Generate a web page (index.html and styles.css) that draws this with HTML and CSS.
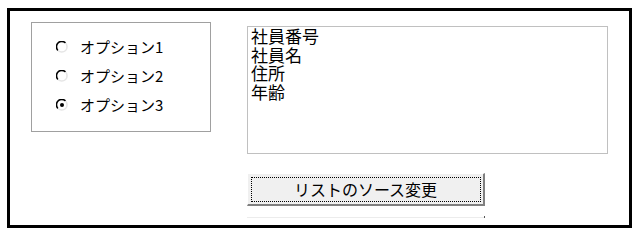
FILE: index.html
```html
<!DOCTYPE html>
<html lang="ja">
<head>
  <meta charset="UTF-8">
  <title>リストのソース変更</title>
  <link rel="stylesheet" href="styles.css">
</head>
<body>
  <!-- フォーム枠 -->
  <div class="frame">
    <!-- オプション -->
    <div class="group">
      <label class="option">
        <svg class="radio" width="12" height="12" viewBox="0 0 12 12">
          <path d="M2 9.5 A5 5 0 0 1 9.5 2" fill="none" stroke="#000" stroke-width="1.6"/>
          <path d="M9.5 2 A5 5 0 0 1 2 9.5" fill="none" stroke="#e6e6e6" stroke-width="1.6"/>
          <circle cx="6" cy="6" r="4" fill="#fff"/>
        </svg>
        <span>オプション1</span>
      </label>
      <label class="option">
        <svg class="radio" width="12" height="12" viewBox="0 0 12 12">
          <path d="M2 9.5 A5 5 0 0 1 9.5 2" fill="none" stroke="#000" stroke-width="1.6"/>
          <path d="M9.5 2 A5 5 0 0 1 2 9.5" fill="none" stroke="#e6e6e6" stroke-width="1.6"/>
          <circle cx="6" cy="6" r="4" fill="#fff"/>
        </svg>
        <span>オプション2</span>
      </label>
      <label class="option">
        <svg class="radio" width="12" height="12" viewBox="0 0 12 12">
          <path d="M2 9.5 A5 5 0 0 1 9.5 2" fill="none" stroke="#000" stroke-width="1.6"/>
          <path d="M9.5 2 A5 5 0 0 1 2 9.5" fill="none" stroke="#e6e6e6" stroke-width="1.6"/>
          <circle cx="6" cy="6" r="4" fill="#fff"/>
          <circle cx="6" cy="6" r="2" fill="#000"/>
        </svg>
        <span>オプション3</span>
      </label>
    </div>

    <!-- リストとボタン -->
    <div class="side">
      <div class="listbox">
        <div>社員番号</div>
        <div>社員名</div>
        <div>住所</div>
        <div>年齢</div>
      </div>
      <button class="change">リストのソース変更</button>
      <div class="rule"></div>
    </div>
  </div>
</body>
</html>
```

FILE: styles.css
```css
* {
  margin: 0;
  padding: 0;
  box-sizing: border-box;
}
body {
  background: #fff;
  color: #000;
  font-family: "Noto Sans CJK JP", "Liberation Sans", sans-serif;
}
/* 外枠 */
.frame {
  margin: 8px 0 0 7px;
  width: 625px;
  height: 220px;
  border: 3px solid #000;
  display: flex;
  align-items: flex-start;
  padding: 11px 0 0 21px;
  gap: 36px;
}
/* オプショングループ */
.group {
  width: 180px;
  height: 110px;
  border: 1px solid #a0a0a0;
  padding: 15px 0 0 24px;
  display: flex;
  flex-direction: column;
  gap: 11px;
}
.option {
  display: flex;
  align-items: center;
  gap: 12px;
  font-size: 15px;
  line-height: 18px;
}
.radio {
  flex: none;
}
/* 右側 */
.side {
  margin-top: 4px;
  display: flex;
  flex-direction: column;
}
.listbox {
  width: 361px;
  height: 128px;
  border: 1px solid #c0c0c0;
  padding: 0 0 0 3px;
  font-size: 17px;
  line-height: 18.7px;
}
.change {
  margin-top: 19px;
  width: 238px;
  height: 33px;
  background: #f0f0f0;
  border-top: 1px solid #fff;
  border-left: 1px solid #fff;
  border-right: 2px solid #808080;
  border-bottom: 2px solid #808080;
  outline: 1px dotted #000;
  outline-offset: -5px;
  font-family: "Noto Sans CJK JP", "Liberation Sans", sans-serif;
  font-size: 16px;
  color: #000;
}
.rule {
  margin-top: 11px;
  width: 238px;
  height: 1px;
  background: #ececec;
  position: relative;
}
.rule::after {
  content: '';
  position: absolute;
  right: 0;
  top: -1px;
  width: 1px;
  height: 2px;
  background: #555;
}
```
